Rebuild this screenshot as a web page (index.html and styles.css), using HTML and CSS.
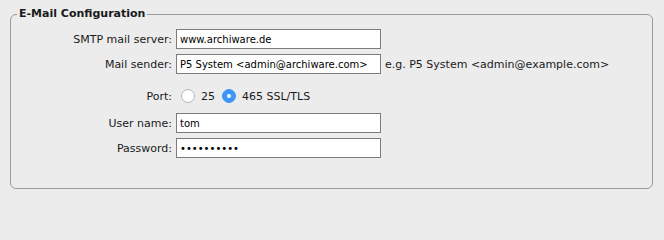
FILE: index.html
```html
<!DOCTYPE html>
<html>
<head>
<meta charset="utf-8">
<link rel="stylesheet" href="styles.css">
</head>
<body>
<fieldset class="box">
  <legend class="box-title">E-Mail Configuration</legend>
  <div class="form">
    <label class="lbl">SMTP mail server:</label>
    <div class="field"><input class="txt" type="text" value="www.archiware.de"></div>

    <label class="lbl">Mail sender:</label>
    <div class="field"><input class="txt" type="text" value="P5 System &lt;admin@archiware.com&gt;"><span class="hint">e.g. P5 System &lt;admin@example.com&gt;</span></div>

    <label class="lbl lbl-port">Port:</label>
    <div class="field field-port">
      <span class="radio"></span><span class="opt">25</span>
      <span class="radio checked"></span><span class="opt">465 SSL/TLS</span>
    </div>

    <label class="lbl">User name:</label>
    <div class="field"><input class="txt" type="text" value="tom"></div>

    <label class="lbl">Password:</label>
    <div class="field"><input class="txt" type="password" value="secretpass"></div>
  </div>
</fieldset>
</body>
</html>
```

FILE: styles.css
```css
html, body {
  margin: 0;
  padding: 0;
  background: #ececec;
}
body {
  font-family: "DejaVu Sans", Verdana, sans-serif;
  font-size: 11px;
  color: #1a1a1a;
}
.box {
  margin: 7px 0 0 10px;
  width: 643px;
  height: 182px;
  box-sizing: border-box;
  border: 1px solid #9a9a9a;
  border-radius: 6px;
  padding: 0;
}
.box-title {
  font-weight: bold;
  font-size: 11px;
  line-height: 14px;
  padding: 0 2px;
  margin-left: 6px;
  color: #1a1a1a;
}
.form {
  display: grid;
  grid-template-columns: 161px 1fr;
  column-gap: 4px;
  row-gap: 5px;
  padding-top: 8px;
  align-items: center;
}
.lbl {
  text-align: right;
  white-space: nowrap;
}
.field {
  display: flex;
  align-items: center;
  height: 20px;
}
.txt {
  width: 205px;
  height: 20px;
  box-sizing: border-box;
  margin: 0;
  border: 1px solid #7c7c7c;
  border-radius: 0;
  background: #fff;
  padding: 0 3px;
  font-family: "DejaVu Sans", Verdana, sans-serif;
  font-size: 10px;
  color: #000;
  outline: none;
}
.hint {
  margin-left: 4px;
  white-space: nowrap;
}
.lbl-port, .field-port {
  margin-top: 7px;
  margin-bottom: 2px;
}
.radio {
  width: 14px;
  height: 14px;
  box-sizing: border-box;
  border-radius: 50%;
  border: 1px solid #b4b4b4;
  background: #fff;
  margin-left: 5px;
  position: relative;
}
.radio.checked {
  background: #3d97fb;
  border-color: #3d97fb;
}
.radio.checked::after {
  content: "";
  position: absolute;
  left: 4px;
  top: 4px;
  width: 4px;
  height: 4px;
  border-radius: 50%;
  background: #fff;
}
.opt {
  margin-left: 6px;
  margin-right: 2px;
}
```
